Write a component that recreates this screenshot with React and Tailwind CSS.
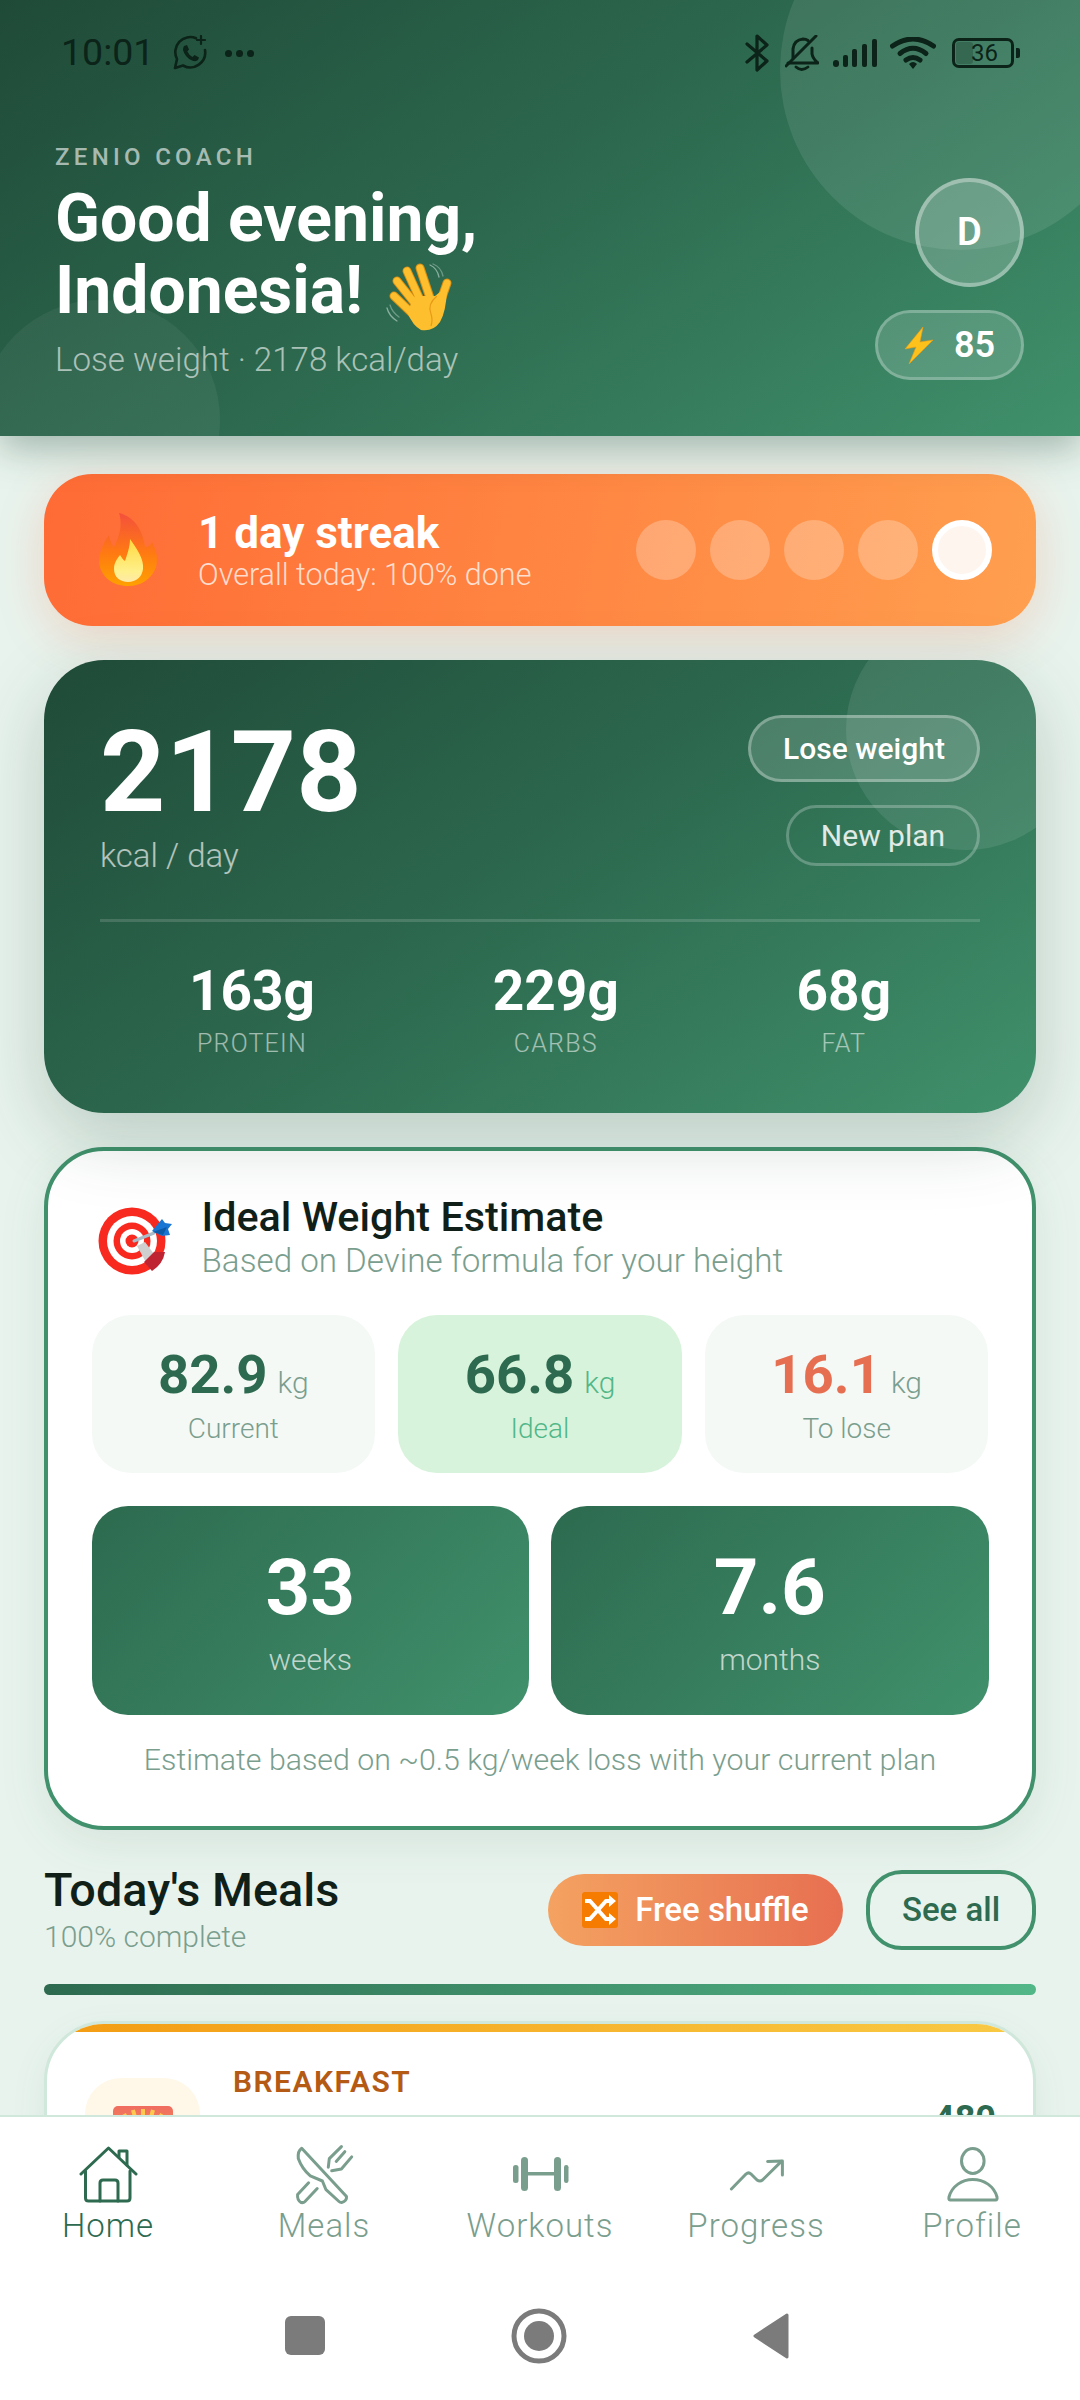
import React from "react";

const Wave = () => (
  <svg width="100" height="85" viewBox="0 0 100 85" fill="none">
    <g stroke="#9fc0b4" strokeWidth="1.3" strokeLinecap="round" opacity=".8">
      <path d="M59 13 Q66 16 68 25" />
      <path d="M62 12 Q70 15 72 24" opacity=".7" />
      <path d="M16 56 Q18 64 26 69" />
      <path d="M19 53 Q21 60 28 65" opacity=".7" />
    </g>
    <g strokeLinecap="round">
      <g stroke="#d98f14" strokeWidth="9">
        <path d="M23 44 L44 64" /><path d="M26 29 L46 54" /><path d="M36 19 L50 50" /><path d="M49 16 L59 46" /><path d="M76 31 L68 54" />
      </g>
      <g stroke="#fdbf2d" strokeWidth="7">
        <path d="M23 44 L44 64" /><path d="M26 29 L46 54" /><path d="M36 19 L50 50" /><path d="M49 16 L59 46" /><path d="M76 31 L68 54" />
      </g>
    </g>
    <path d="M36 60 L44 44 L64 44 L69 40 L76 38 Q75 60 69 70 Q62 80 50 78 Q42 74 36 60Z" fill="#fdbf2d" />
    <path d="M66 44 Q56 52 60 62 Q62 68 60 74" stroke="#e89a1a" strokeWidth="1.2" fill="none" />
  </svg>
);

const Bolt = () => (
  <svg width="30" height="37" viewBox="0 0 30 37">
    <path d="M19 0 L1 22 L12 20 L5 37 L29 13 L16 15 Z" fill="#fcc21b" stroke="#f09a15" strokeWidth=".6" />
  </svg>
);

const Flame = () => (
  <svg width="58" height="74" viewBox="0 0 58 74">
    <defs>
      <linearGradient id="f1" x1="0" y1="0" x2="0" y2="1">
        <stop offset="0" stopColor="#f4503c" />
        <stop offset=".55" stopColor="#ff7a12" />
        <stop offset="1" stopColor="#ffa000" />
      </linearGradient>
      <linearGradient id="f2" x1="0" y1="0" x2="0" y2="1">
        <stop offset="0" stopColor="#ffd83e" />
        <stop offset=".75" stopColor="#fff08a" />
        <stop offset="1" stopColor="#ffe9a8" />
      </linearGradient>
    </defs>
    <path d="M20 0 C36 4 44 18 46 34 C49 34 52 32 53 29 C58 38 59 46 57 54 C53 66 42 73 29 73 C14 73 2 64 0 50 C0 40 4 30 10 22 C11 28 13 32 15 34 C20 24 24 12 20 0Z" fill="url(#f1)" />
    <path d="M31 26 C38 36 45 46 44 56 C43 64 37 69 29 69 C21 69 15 64 15 56 C15 50 18 46 21 42 C23 45 24 47 26 48 C28 42 31 34 31 26Z" fill="url(#f2)" />
  </svg>
);

const Target = () => (
  <svg width="100" height="90" viewBox="0 0 100 90" className="-ml-[7px] shrink-0">
    <circle cx="47" cy="47" r="33.5" fill="#f8291f" />
    <circle cx="47" cy="47" r="25" fill="#fff" />
    <circle cx="47" cy="47" r="18.5" fill="#f8291f" />
    <circle cx="47" cy="47" r="12" fill="#fff" />
    <circle cx="47" cy="47" r="6.5" fill="#f8291f" />
    <path d="M52 52 L60 48 L72 64 L63 72Z" fill="#cfcfcf" />
    <path d="M59 68 L69 58 L80 58 Q78 70 67 77Z" fill="#bf2332" />
    <path d="M49 47 L69 39" stroke="#a9bcc8" strokeWidth="3" strokeLinecap="round" />
    <path d="M67 37 L77 25 L80 29 L87 30 L83 35 L85 41 L77 42Z" fill="#1976d2" />
    <path d="M68 38 L82 33 L78 41Z" fill="#0d5aa7" />
  </svg>
);

const Shuffle = () => (
  <svg width="36" height="36" viewBox="0 0 36 36" className="shrink-0">
    <rect x="0" y="0" width="36" height="36" rx="3" fill="#f57c00" />
    <g stroke="#fff" strokeWidth="4" fill="none">
      <path d="M3 9 H8 L24 27 H28" />
      <path d="M3 27 H8 L24 9 H28" />
    </g>
    <path d="M27 3 L34 9 L27 15Z M27 21 L34 27 L27 33Z" fill="#fff" />
  </svg>
);

const Sunrise = () => (
  <svg width="60" height="60" viewBox="0 0 60 60">
    <defs>
      <linearGradient id="s1" x1="0" y1="0" x2="0" y2="1">
        <stop offset="0" stopColor="#ef6c5f" />
        <stop offset="1" stopColor="#ffb74d" />
      </linearGradient>
    </defs>
    <rect width="60" height="60" rx="5" fill="url(#s1)" />
    <g stroke="#ffc94f" strokeWidth="4">
      <path d="M30 40 V3" /><path d="M30 40 L20 4" /><path d="M30 40 L40 4" /><path d="M30 40 L11 8" /><path d="M30 40 L49 8" />
    </g>
  </svg>
);

const INK = "#0b2318";

const WhatsAppPlus = () => (
  <svg width="34" height="36" viewBox="0 0 34 36" fill="none" stroke={INK} strokeLinecap="round" strokeLinejoin="round">
    <path d="M23 3.2 A15 15 0 0 0 4 24 L2 33 L10 30.5 A15 15 0 0 0 32 15" strokeWidth="2.6" />
    <path d="M28 1 V9 M24 5 H32" strokeWidth="2.2" />
    <path d="M11 11 L14 10 L16 14.5 L14.3 16.5 Q16 20 19.5 22 L21.5 20 L26 22.5 L25 25 Q23 27 19 25.5 Q12 22.5 10 15 Q10 12.5 11 11Z" fill={INK} stroke="none" />
  </svg>
);

const Bluetooth = () => (
  <svg width="24" height="38" viewBox="0 0 24 38" fill="none" stroke={INK} strokeWidth="3.2" strokeLinecap="round" strokeLinejoin="round">
    <path d="M2 10 L22 27 L12 36 V2 L22 11 L2 28" />
  </svg>
);

const BellOff = () => (
  <svg width="34" height="36" viewBox="0 0 34 36" fill="none" stroke={INK} strokeWidth="3" strokeLinecap="round" strokeLinejoin="round">
    <path d="M8 23 V14 Q9 5 18 4 Q21 4 23 5.5" />
    <path d="M27 13 V19 Q28 24 33 28 H3" />
    <path d="M11 32 Q16.5 37 23 32" strokeWidth="2.8" />
    <path d="M31 1 L1 31" />
  </svg>
);

const Signal = () => (
  <svg width="44" height="28" viewBox="0 0 44 28" fill={INK}>
    <rect x="0" y="21" width="6" height="7" rx="3" />
    <rect x="10" y="16" width="5" height="12" rx="2" />
    <rect x="19" y="10" width="5" height="18" rx="2" />
    <rect x="29" y="5" width="5" height="23" rx="2" />
    <rect x="39" y="0" width="5" height="28" rx="2" />
  </svg>
);

const Wifi = () => (
  <svg width="46" height="32" viewBox="0 0 46 32" fill="none" stroke={INK} strokeWidth="5" strokeLinecap="round">
    <path d="M2.5 9 Q23 -5 43.5 9" />
    <path d="M10 16.5 Q23 6 36 16.5" />
    <path d="M16 23 Q23 18 30 23" />
    <path d="M19 27 L23 32 L27 27 Q23 23 19 27Z" fill={INK} strokeWidth="0" />
  </svg>
);

const Battery = () => (
  <div className="flex items-center gap-[2px]">
    <div className="relative flex h-[30px] w-[62px] items-center justify-center overflow-hidden rounded-[7px] border-[3px] border-[#0b2318] pl-[3px] text-[24px] leading-none text-[#0b2318]">
      <span className="absolute left-[1px] top-[1px] bottom-[1px] w-[17px] rounded-[3px] bg-[#0b2318]/25" />
      <span className="relative">36</span>
    </div>
    <div className="h-[10px] w-[4px] rounded-r-[2px] bg-[#0b2318]" />
  </div>
);

const NavIcon = ({ children, color }) => (
  <svg width="60" height="60" viewBox="0 0 60 60" fill="none" stroke={color} strokeWidth="3" strokeLinecap="round" strokeLinejoin="round">
    {children}
  </svg>
);

const tabs = [
  {
    label: "Home",
    active: true,
    icon: (
      <>
        <path d="M3 29 L30.5 3 L58 29" />
        <path d="M7.5 26 V53 Q7.5 56 10.5 56 H49 Q52 56 52 53 V26" />
        <path d="M22 56 V38 Q22 35 25 35 H37 Q40 35 40 38 V56" />
        <path d="M41 12 V6 H49 V20" />
      </>
    ),
  },
  {
    label: "Meals",
    icon: (
      <>
        <path d="M7.7 3.3 L52.5 51.5 Q53 56 47.5 57.5 Q46 57.5 45 56.5 L32 44.7 L28.4 36 L16.3 30.9 Q8 24 4.3 13.6 Q3.5 6 7.7 3.3Z" />
        <path d="M14.6 37.8 L3.6 49.5 Q3 55 7 57.5 Q9.5 58 11 56.5 L23.2 43.5" />
        <path d="M47.4 1.6 L35.3 13.6 L34.3 22.2" />
        <path d="M57.7 11.9 L47.4 24 L37.7 25.7" />
        <path d="M50.8 6.7 L42.2 16.4" />
      </>
    ),
  },
  {
    label: "Workouts",
    icon: (
      <g stroke="none" fill="#7a9e8e">
        <rect x="3" y="20" width="5.5" height="18" rx="2.5" />
        <rect x="11" y="12" width="7" height="34" rx="3.5" />
        <rect x="17" y="27" width="28" height="3.5" />
        <rect x="44" y="12" width="7" height="34" rx="3.5" />
        <rect x="54" y="20" width="4.5" height="18" rx="2.2" />
      </g>
    ),
  },
  {
    label: "Progress",
    icon: (
      <>
        <path d="M5.4 44 L20 29 Q22.6 26.7 25 29 L31 35 Q34 37 36.5 35 L55.4 16.4" />
        <path d="M41.6 16.4 L56.4 16 V30" />
      </>
    ),
  },
  {
    label: "Profile",
    icon: (
      <>
        <ellipse cx="30.8" cy="16" rx="11.3" ry="12.5" />
        <path d="M8 55 Q6.5 55 7 52 C10 41 20 34.5 30.8 34.5 C42 34.5 52 41 55 52 Q55.5 55 53.5 55Z" />
      </>
    ),
  },
];

const Small = ({ value, unit, label, box, valueCls, unitCls, labelCls }) => (
  <div className={`flex h-[158px] flex-col items-center rounded-[39px] pt-[26px] ${box}`}>
    <div className="flex h-[66px] items-baseline">
      <span className={`text-[54.5px] font-bold leading-[66px] ${valueCls}`}>{value}</span>
      <span className={`ml-[10px] text-[30px] font-light ${unitCls}`}>{unit}</span>
    </div>
    <div className={`mt-[4px] text-[28px] font-light leading-[36px] ${labelCls}`}>{label}</div>
  </div>
);

const Big = ({ value, label, from }) => (
  <div className={`flex h-[209px] flex-col items-center rounded-[36px] pt-[40px] ${from}`}>
    <div className="text-[78px] font-bold leading-[84px] text-white">{value}</div>
    <div className="mt-[10px] text-[30px] font-light leading-[40px] text-white/70">{label}</div>
  </div>
);

const Macro = ({ value, label }) => (
  <div className="flex flex-col items-center">
    <div className="text-[55px] font-bold leading-[62px] text-white">{value}</div>
    <div className="mt-[6px] text-[25px] font-light leading-[32px] tracking-[1.2px] text-white/55">{label}</div>
  </div>
);

export default function App() {
  return (
    <div className="flex h-[2400px] w-[1080px] flex-col overflow-hidden bg-[#e8f3ed] font-['Roboto',sans-serif]">
      <header className="relative z-10 h-[436px] shrink-0 bg-[linear-gradient(145deg,#1f4a38_0%,#2d6a4f_50%,#40916c_100%)] shadow-[0_12px_36px_rgba(27,67,50,0.35)]">
        <div className="absolute inset-0 overflow-hidden">
          <div className="absolute left-[780px] top-[-110px] h-[360px] w-[360px] rounded-full bg-white/[0.09]" />
          <div className="absolute left-[-20px] top-[300px] h-[240px] w-[240px] rounded-full bg-white/5" />
        </div>
        <div className="relative flex h-[106px] items-center justify-between pl-[61px] pr-[60px]">
          <div className="flex items-center">
            <span className="text-[37.5px] leading-none text-[#0b2318]">10:01</span>
            <span className="ml-[19px]"><WhatsAppPlus /></span>
            <span className="ml-[18px] flex gap-[4px]">
              <i className="h-[7px] w-[7px] rounded-full bg-[#0b2318]" />
              <i className="h-[7px] w-[7px] rounded-full bg-[#0b2318]" />
              <i className="h-[7px] w-[7px] rounded-full bg-[#0b2318]" />
            </span>
          </div>
          <div className="flex items-center">
            <Bluetooth />
            <span className="ml-[16px]"><BellOff /></span>
            <span className="ml-[14px]"><Signal /></span>
            <span className="ml-[13px]"><Wifi /></span>
            <span className="ml-[16px]"><Battery /></span>
          </div>
        </div>
        <div className="relative flex justify-between pl-[55px] pr-[56px] pt-[34px]">
          <div>
            <div className="text-[24px] font-medium leading-[34px] tracking-[4.3px] text-white/60">ZENIO COACH</div>
            <div className="mt-[9px] text-[66px] font-bold leading-[72px] text-white">Good evening,</div>
            <div className="flex h-[72px] items-center text-[66px] font-bold leading-[72px] text-white">
              <span>Indonesia!</span>
              <span className="-my-[10px] ml-[8px] -mt-[4px]"><Wave /></span>
            </div>
            <div className="mt-[14px] text-[33.1px] font-light leading-[38px] text-white/60">Lose weight · 2178 kcal/day</div>
          </div>
          <div className="flex flex-col items-end pt-[38px]">
            <div className="flex h-[109px] w-[109px] items-center justify-center rounded-full border-[4px] border-white/35 bg-white/20 text-[38px] font-semibold text-white">D</div>
            <div className="mt-[23px] flex h-[70px] w-[149px] items-center justify-center gap-[20px] rounded-full border-[3px] border-white/25 bg-white/15">
              <Bolt />
              <span className="text-[36px] font-semibold leading-none text-white">85</span>
            </div>
          </div>
        </div>
      </header>

      <main className="min-h-0 flex-1 overflow-hidden px-[44px] pt-[38px]">
        <section className="relative flex h-[152px] items-center rounded-[48px] bg-[linear-gradient(100deg,#ff6b35,#ff9f4f)] pl-[55px] pr-[44px] shadow-[0_12px_48px_rgba(255,107,53,0.22)]">
          <Flame />
          <div className="ml-[41px] flex-1">
            <div className="text-[44px] font-bold leading-[50px] text-white">1 day streak</div>
            <div className="text-[30.5px] font-light leading-[34px] text-white/75">Overall today: 100% done</div>
          </div>
          <div className="flex gap-[14px]">
            <div className="h-[60px] w-[60px] rounded-full bg-white/25" />
            <div className="h-[60px] w-[60px] rounded-full bg-white/25" />
            <div className="h-[60px] w-[60px] rounded-full bg-white/25" />
            <div className="h-[60px] w-[60px] rounded-full bg-white/25" />
            <div className="h-[60px] w-[60px] rounded-full border-[6px] border-white bg-[#fff5ef]" />
          </div>
        </section>

        <section className="relative mt-[34px] h-[453px] rounded-[60px] bg-[linear-gradient(145deg,#1f4a38_0%,#2d6a4f_50%,#40916c_100%)] px-[56px] shadow-[0_24px_72px_rgba(27,67,50,0.22)]">
          <div className="absolute inset-0 overflow-hidden rounded-[60px]">
            <div className="absolute right-[-50px] top-[-50px] h-[240px] w-[240px] rounded-full bg-white/[0.09]" />
          </div>
          <div className="relative flex h-[259px] justify-between">
            <div className="pt-[50px]">
              <div className="text-[114px] font-bold leading-[124px] text-white">2178</div>
              <div className="text-[33px] font-light leading-[44px] text-white/65">kcal / day</div>
            </div>
            <div className="flex flex-col items-end pt-[55px]">
              <div className="flex h-[67px] w-[232px] items-center justify-center rounded-full border-[3px] border-white/30 bg-white/15 text-[30px] font-medium text-white">Lose weight</div>
              <div className="mt-[23px] flex h-[61px] w-[194px] items-center justify-center rounded-full border-[3px] border-white/25 text-[30px] text-white/85">New plan</div>
            </div>
          </div>
          <div className="relative h-[3px] bg-white/15" />
          <div className="relative flex justify-around pt-[38px]">
            <Macro value="163g" label="PROTEIN" />
            <Macro value="229g" label="CARBS" />
            <Macro value="68g" label="FAT" />
          </div>
        </section>

        <section className="mt-[34px] h-[683px] rounded-[60px] border-[4.5px] border-[#40916c] bg-white px-[43.5px] pt-[44px] shadow-[0_12px_48px_rgba(45,106,79,0.1)]">
          <div className="flex h-[88px] items-center">
            <Target />
            <div className="ml-[17px]">
              <div className="text-[41.3px] font-medium leading-[44px] text-[#101f18]">Ideal Weight Estimate</div>
              <div className="text-[33.2px] font-light leading-[44px] text-[#7a9e8e]">Based on Devine formula for your height</div>
            </div>
          </div>
          <div className="mt-[32px] grid grid-cols-3 gap-[23px]">
            <Small value="82.9" unit="kg" label="Current" box="bg-[#f4f9f6]" valueCls="text-[#2d6a4f]" unitCls="text-[#7a9e8e]" labelCls="text-[#7a9e8e]" />
            <Small value="66.8" unit="kg" label="Ideal" box="bg-[#d8f3dc]" valueCls="text-[#2d6a4f]" unitCls="text-[#52b788]" labelCls="text-[#52b788]" />
            <Small value="16.1" unit="kg" label="To lose" box="bg-[#f4f9f6]" valueCls="text-[#e76f51]" unitCls="text-[#7a9e8e]" labelCls="text-[#7a9e8e]" />
          </div>
          <div className="mt-[33px] grid grid-cols-2 gap-[22px]">
            <Big value="33" label="weeks" from="bg-[linear-gradient(135deg,#2d6a4f,#40916c)]" />
            <Big value="7.6" label="months" from="bg-[linear-gradient(135deg,#2d6a4f,#40916c)]" />
          </div>
          <div className="mt-[26px] text-center text-[30.3px] font-light leading-[38px] text-[#7a9e8e]">Estimate based on ~0.5 kg/week loss with your current plan</div>
        </section>

        <section className="mt-[40px] flex h-[80px] items-center justify-between">
          <div>
            <div className="text-[46.8px] font-medium leading-[50px] text-[#101f18]">Today's Meals</div>
            <div className="pt-[3px] text-[30px] font-light leading-[38px] text-[#7a9e8e]">100% complete</div>
          </div>
          <div className="flex items-center gap-[23px]">
            <div className="flex h-[72px] w-[295px] items-center justify-center gap-[17px] rounded-[36px] bg-[linear-gradient(90deg,#f4a261,#e76f51)] text-[33px] font-medium text-white">
              <Shuffle />
              <span>Free shuffle</span>
            </div>
            <div className="flex h-[80px] w-[170px] items-center justify-center rounded-[36px] border-[4.5px] border-[#40916c] text-[33px] font-medium text-[#2d6a4f]">See all</div>
          </div>
        </section>

        <div className="mt-[34px] h-[11px] rounded-full bg-[linear-gradient(90deg,#2d6a4f,#52b788)]" />

        <section className="relative mt-[26px] h-[300px] overflow-hidden rounded-[60px] border-[3px] border-[#cfe8db] bg-white shadow-[0_12px_36px_rgba(45,106,79,0.08)]">
          <div className="h-[8px] bg-[linear-gradient(90deg,#f39c12,#f9ca45)]" />
          <div className="flex pl-[38px] pr-[37px] pt-[32px]">
            <div className="mt-[14px] flex h-[115px] w-[115px] shrink-0 items-center justify-center rounded-[36px] bg-[#fff8e8]">
              <Sunrise />
            </div>
            <div className="ml-[33px] flex-1">
              <div className="text-[30px] font-semibold leading-[36px] tracking-[1.5px] text-[#b45a14]">BREAKFAST</div>
            </div>
            <div className="pt-[33px] text-[36px] font-bold leading-[44px] text-[#2d6a4f]">480</div>
          </div>
        </section>
      </main>

      <nav className="flex h-[285px] shrink-0 flex-col border-t-[2px] border-[#cfe8db] bg-white pt-[28px]">
        <div className="grid grid-cols-5">
          {tabs.map((t) => (
            <div key={t.label} className="flex flex-col items-center">
              <NavIcon color={t.active ? "#2d6a4f" : "#7a9e8e"}>{t.icon}</NavIcon>
              <span className={`pt-[1px] text-[33px] font-light leading-[40px] tracking-[1px] ${t.active ? "text-[#2d6a4f]" : "text-[#7a9e8e]"}`}>{t.label}</span>
            </div>
          ))}
        </div>
        <div className="flex flex-1 items-center justify-center gap-[183px] pr-[6px] pt-[25px]">
          <div className="h-[39px] w-[40px] rounded-[6px] bg-[#7b7b7b]" />
          <svg width="64" height="64" viewBox="0 0 64 64" className="-mx-[1px]">
            <circle cx="32" cy="32" r="25" fill="none" stroke="#7b7b7b" strokeWidth="5" />
            <circle cx="32" cy="32" r="15" fill="#7b7b7b" />
          </svg>
          <svg width="36" height="46" viewBox="0 0 36 46">
            <path d="M34 2 L2 23 L34 44Z" fill="#7b7b7b" stroke="#7b7b7b" strokeWidth="3" strokeLinejoin="round" />
          </svg>
        </div>
      </nav>
    </div>
  );
}
